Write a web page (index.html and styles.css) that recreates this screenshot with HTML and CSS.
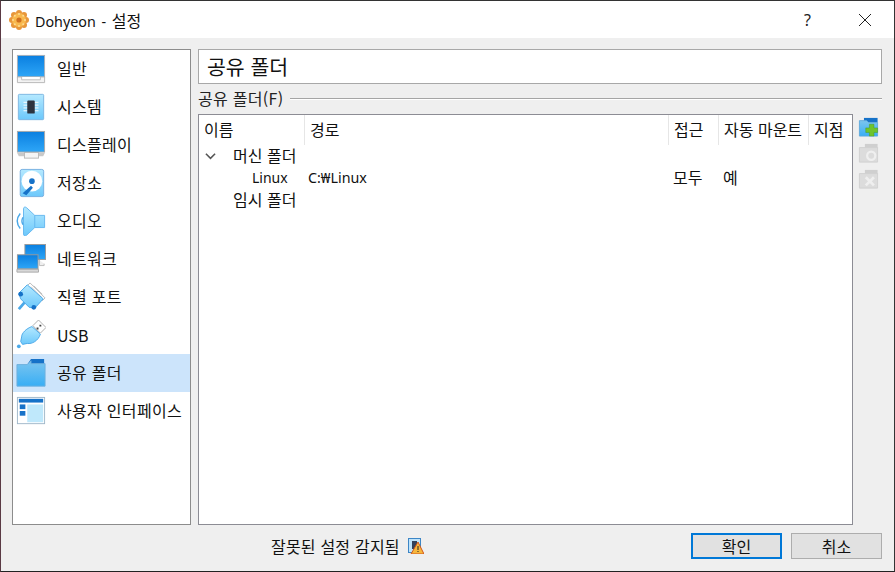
FILE: index.html
```html
<!DOCTYPE html>
<html lang="ko">
<head>
<meta charset="utf-8">
<title>Dohyeon - 설정</title>
<link rel="stylesheet" href="styles.css">
</head>
<body>
<svg class="defs" width="0" height="0">
  <defs>
    <linearGradient id="blue" x1="0" y1="0" x2="0" y2="1"><stop offset="0" stop-color="#0a7fe0"/><stop offset="1" stop-color="#2ea6f7"/></linearGradient>
    <linearGradient id="light" x1="0" y1="0" x2="0" y2="1"><stop offset="0" stop-color="#b5e9ff"/><stop offset="1" stop-color="#6cc8fb"/></linearGradient>
    <linearGradient id="folder" x1="0" y1="0" x2="0" y2="1"><stop offset="0" stop-color="#7cc5ef"/><stop offset="1" stop-color="#38aef5"/></linearGradient>
  </defs>
</svg>
<div class="window">
  <header class="titlebar">
    <svg class="app-icon" viewBox="0 0 20 20"><g fill="#e8963a"><circle cx="10" cy="3" r="3"/><circle cx="10" cy="17" r="3"/><circle cx="3" cy="10" r="3"/><circle cx="17" cy="10" r="3"/><circle cx="5" cy="5" r="3"/><circle cx="15" cy="5" r="3"/><circle cx="5" cy="15" r="3"/><circle cx="15" cy="15" r="3"/></g><circle cx="10" cy="10" r="7" fill="#f8b84e"/><circle cx="10" cy="10" r="2.600" fill="#d0701f"/><g fill="#fcdc95"><circle cx="10" cy="4" r="1"/><circle cx="10" cy="16" r="1"/><circle cx="4" cy="10" r="1"/><circle cx="16" cy="10" r="1"/><circle cx="5.800" cy="5.800" r="1"/><circle cx="14.200" cy="5.800" r="1"/><circle cx="5.800" cy="14.200" r="1"/><circle cx="14.200" cy="14.200" r="1"/></g></svg>
    <span class="title-text">Dohyeon - <span class="title-ko">설정</span></span>
    <span class="help">?</span>
    <svg class="close" viewBox="0 0 14 14"><path d="M1 1l12 12M13 1L1 13" stroke="#222" stroke-width="1" fill="none"/></svg>
  </header>
  <main class="content">
    <nav class="sidebar">
      <div class="nav-item"><svg class="nav-icon" viewBox="0 0 32 32"><rect x="1.500" y="1.500" width="29" height="23" fill="url(#blue)" stroke="#a9b0b8"/><path d="M1.500 24.500h29v6h-29z" fill="#f3f3f3" stroke="#b5b5b5"/><path d="M6 24.500v3h20v-3" fill="#fff" stroke="#bbb"/></svg><span>일반</span></div>
      <div class="nav-item"><svg class="nav-icon" viewBox="0 0 32 32"><rect x="2.500" y="2.500" width="27" height="27" rx="1" fill="url(#light)" stroke="#7cb4e0"/><path d="M8 11h16M8 14h16M8 17h16M8 20h16" stroke="#fff" stroke-width="1"/><rect x="12" y="9" width="8" height="14" rx="1" fill="#2c3340"/></svg><span>시스템</span></div>
      <div class="nav-item"><svg class="nav-icon" viewBox="0 0 32 32"><rect x="1.500" y="1.500" width="29" height="22" fill="url(#blue)" stroke="#a9a9a9"/><path d="M1 24h30l-2 4H3z" fill="#c9c9c9"/><rect x="9" y="24" width="15" height="6" fill="#f5f5f5" stroke="#b8b8b8"/></svg><span>디스플레이</span></div>
      <div class="nav-item"><svg class="nav-icon" viewBox="0 0 32 32"><rect x="4.500" y="1.500" width="25" height="29" rx="2" fill="url(#light)" stroke="#73aee0"/><circle cx="17" cy="14" r="11" fill="#fff"/><circle cx="17" cy="14" r="3" fill="#1672c8"/><path d="M7 27l9-8 2 2-7 8z" fill="#1672c8"/></svg><span>저장소</span></div>
      <div class="nav-item"><svg class="nav-icon" viewBox="0 0 32 32"><path d="M8 3c0-2 2-2.500 3.500-1l8.500 8h10.500v13H20l-8.500 8c-1.500 1.500-3.500 1-3.500-1z" fill="url(#light)" stroke="#63b6ef"/><path d="M20 10v13" stroke="#63b6ef"/><path d="M4.500 8c-4 5-4 11 0 16" fill="none" stroke="#4aa8e8" stroke-width="1.500"/><path d="M7.500 12c-1.500 2.500-1.500 5.500 0 8" fill="none" stroke="#4aa8e8" stroke-width="1.500"/></svg><span>오디오</span></div>
      <div class="nav-item"><svg class="nav-icon" viewBox="0 0 32 32"><rect x="9.500" y="0.500" width="22" height="16" fill="url(#blue)" stroke="#999"/><path d="M25 17v6h5v-2" fill="#eee" stroke="#bbb"/><rect x="1.500" y="11.500" width="22" height="15" fill="url(#blue)" stroke="#999"/><path d="M1 27h23v3H1z" fill="#d8d8d8" stroke="#aaa"/></svg><span>네트워크</span></div>
      <div class="nav-item"><svg class="nav-icon" viewBox="0 0 32 32"><path d="M15 1l16 16-3 3L12 4z" fill="#fff" stroke="#b8b8b8"/><path d="M16 5l11 11M19 4l9 9" stroke="#bbb"/><path d="M12 3l17 15-9 10-6-1-9-9L3 12z" fill="url(#light)" stroke="#4aa8e8"/><circle cx="5" cy="13" r="2.500" fill="#1672c8"/><circle cx="19" cy="27" r="2.500" fill="#1672c8"/><path d="M9 22l-6 7" stroke="#4aa8e8" stroke-width="3"/></svg><span>직렬 포트</span></div>
      <div class="nav-item"><svg class="nav-icon" viewBox="0 0 32 32"><path d="M18 6l6-6 8 8-6 6z" fill="#fff" stroke="#aaa"/><path d="M25 5h2v2h-2zM22 8h2v2h-2z" fill="#444"/><path d="M17 7l9 8c-2 7-9 11-14 10l-5 1-2-3 1-5C6 14 11 9 17 7z" fill="url(#light)" stroke="#4aa8e8"/><circle cx="3" cy="28" r="2" fill="#4aa8e8"/></svg><span class="nav-latin">USB</span></div>
      <div class="nav-item selected"><svg class="nav-icon" viewBox="0 0 32 32"><path d="M16 1h14v6H12z" fill="#1672c8"/><path d="M1 7h11l4-4v3h15v24H1z" fill="url(#folder)" stroke="#6fb0dd"/></svg><span>공유 폴더</span></div>
      <div class="nav-item"><svg class="nav-icon" viewBox="0 0 32 32"><rect x="1.500" y="1.500" width="29" height="28" fill="#fff" stroke="#9fb7c9"/><rect x="3" y="3" width="26" height="4" fill="#1672c8"/><rect x="4" y="9" width="6" height="5" fill="#1672c8"/><rect x="4" y="16" width="6" height="5" fill="#1672c8"/><rect x="12" y="9" width="17" height="19" fill="#bfe8fb"/></svg><span>사용자 인터페이스</span></div>
    </nav>
    <section class="panel">
      <h1 class="page-title">공유 폴더</h1>
      <div class="group-label"><span>공유 폴더(F)</span><i class="rule"></i></div>
      <div class="share-area">
        <div class="tree">
          <div class="tree-row tree-head">
            <div>이름</div><div>경로</div><div>접근</div><div>자동 마운트</div><div>지점</div>
          </div>
          <div class="tree-row tree-item">
            <div class="name-root"><svg class="chevron" viewBox="0 0 12 8"><path d="M1 1.500l5 5 5-5" fill="none" stroke="#555" stroke-width="1.700"/></svg>머신 폴더</div><div></div><div></div><div></div><div></div>
          </div>
          <div class="tree-row tree-item">
            <div class="name-child">Linux</div><div class="path">C:₩Linux</div><div class="cell">모두</div><div class="cell">예</div><div></div>
          </div>
          <div class="tree-row tree-item">
            <div class="name-root no-chevron">임시 폴더</div><div></div><div></div><div></div><div></div>
          </div>
        </div>
        <div class="tools">
          <svg viewBox="0 0 22 22"><path d="M6 1h15v5H6z" fill="#1672c8"/><path d="M1 4h8l2 2h10v15H1z" fill="url(#folder)" stroke="#5fa9dc"/><path d="M12 8h5v4h4v5h-4v4h-5v-4H8v-5h4z" fill="#6ec42c" stroke="#4a9a1a" stroke-width=".5"/></svg>
          <svg viewBox="0 0 22 22"><path d="M7 1h14v5H7z" fill="#cfcfcf"/><path d="M1 5h20v16H1z" fill="#dcdcdc" stroke="#cfcfcf"/><circle cx="14" cy="14" r="4.500" fill="none" stroke="#efefef" stroke-width="2.500"/></svg>
          <svg viewBox="0 0 22 22"><path d="M7 1h14v5H7z" fill="#cfcfcf"/><path d="M1 5h20v16H1z" fill="#dcdcdc" stroke="#cfcfcf"/><path d="M8 9l9 9M17 9l-9 9" stroke="#efefef" stroke-width="3"/></svg>
        </div>
      </div>
    </section>
  </main>
  <footer class="footer">
    <div class="warning">
      <span>잘못된 설정 감지됨</span>
      <svg class="warn-icon" viewBox="0 0 16 16"><rect x="0.500" y="0.500" width="12" height="14" fill="#bfe3fa" stroke="#3d86c6"/><rect x="4" y="3" width="5" height="8" fill="#33425a"/><path d="M10 4l6 12H3z" fill="#f6b73c" stroke="#d2561a"/><path d="M9.500 8h1v4h-1zM9.500 13h1v1h-1z" fill="#222"/></svg>
    </div>
    <button class="btn primary" type="button">확인</button>
    <button class="btn" type="button">취소</button>
  </footer>
</div>
</body>
</html>
```
FILE: styles.css
```css
* { box-sizing: border-box; }
html, body { margin: 0; padding: 0; height: 100%; }
body {
  width: 895px;
  height: 572px;
  overflow: hidden;
  font-family: "Noto Sans", "Noto Sans CJK KR", sans-serif;
  font-size: 16px;
  color: #111;
  background: #efefef;
}
.defs { display: block; height: 0; }
.window {
  width: 895px;
  height: 572px;
  display: flex;
  flex-direction: column;
  border: 1px solid #333;
  border-bottom-color: #222;
  border-left-color: #5a3a44;
  background: #efefef;
}
.titlebar {
  height: 37px;
  background: #fff;
  display: flex;
  align-items: center;
  padding-left: 8px;
  flex: none;
}
.app-icon { width: 20px; height: 20px; }
.title-text { margin-left: 6px; font-size: 14.3px; color: #111; word-spacing: 2px; white-space: nowrap; }
.title-ko { font-family: "Noto Sans CJK KR", sans-serif; font-size: 16px; }
.help { margin-left: auto; width: 14px; font-size: 16px; color: #222; }
.close { width: 14px; height: 14px; margin-left: 40px; margin-right: 22px; }
.content {
  flex: 1;
  display: flex;
  gap: 7px;
  padding: 11px 12px 0 11px;
  min-height: 0;
}
.sidebar {
  width: 179px;
  height: 476px;
  background: #fff;
  border: 1px solid #8c8c8c;
  flex: none;
}
.nav-item {
  height: 38px;
  display: flex;
  align-items: center;
  padding-left: 3px;
  gap: 11px;
  font-family: "Noto Sans CJK KR", sans-serif;
  font-size: 16px;
  letter-spacing: .3px;
}
.nav-item span { position: relative; top: -1px; white-space: nowrap; }
.nav-item .nav-latin { top: 0; letter-spacing: 0; }
.nav-item.selected { background: #cce4fb; }
.nav-icon { width: 30px; height: 30px; flex: none; }
.panel { flex: 1; display: flex; flex-direction: column; min-width: 0; }
.page-title {
  margin: 0;
  height: 35px;
  flex: none;
  background: #fff;
  border: 1px solid #a8a8a8;
  font-family: "Noto Sans CJK KR", sans-serif;
  font-size: 20.500px;
  font-weight: 400;
  line-height: 33px;
  padding-left: 8px;
  color: #111;
}
.group-label {
  display: flex;
  align-items: center;
  gap: 7px;
  height: 18px;
  flex: none;
  margin-top: 6px;
  margin-bottom: 6px;
  font-family: "Noto Sans CJK KR", sans-serif;
  font-size: 16px;
  line-height: 16px;
  letter-spacing: .3px;
  color: #222;
  white-space: nowrap;
}
.group-label span { padding-bottom: 2px; }
.rule { flex: 1; height: 2px; background: linear-gradient(#a5a5a5 50%, #fff 50%); }
.share-area { display: flex; gap: 5px; }
.tree {
  width: 655px;
  height: 411px;
  background: #fff;
  border: 1px solid #8c8c94;
  font-family: "Noto Sans CJK KR", sans-serif;
}
.tree-row {
  display: grid;
  grid-template-columns: 106px 364px 50px 90px 43px;
}
.tree-head { height: 30px; }
.tree-head > div {
  border-right: 1px solid #e6e6e6;
  padding-left: 5px;
  line-height: 29px;
  font-size: 16px;
  white-space: nowrap;
}
.tree-head > div:last-child { border-right: 0; }
.tree-item { height: 22px; line-height: 21px; font-size: 16px; }
.name-root { display: flex; align-items: center; white-space: nowrap; padding-left: 6px; padding-bottom: 2px; }
.chevron { width: 11px; height: 8px; margin-right: 17px; flex: none; }
.no-chevron { padding-left: 34px; }
.name-child { padding-left: 53px; font-family: "Noto Sans", sans-serif; font-size: 14px; }
.path { padding-left: 3px; font-family: "Noto Sans", "Noto Sans CJK KR", sans-serif; font-size: 14.300px; white-space: nowrap; }
.cell { padding-left: 4px; }
.tools { display: flex; flex-direction: column; gap: 6px; padding-top: 3px; }
.tools svg { width: 21px; height: 20px; display: block; }
.footer {
  height: 46px;
  flex: none;
  display: flex;
  align-items: center;
  padding: 0 12px 5px 270px;
}
.warning { display: flex; align-items: center; gap: 8px; font-family: "Noto Sans CJK KR", sans-serif; font-size: 16px; letter-spacing: .2px; flex: 1; }
.warn-icon { width: 16px; height: 16px; }
.btn {
  width: 91px;
  height: 26px;
  flex: none;
  border: 1px solid #adadad;
  background: #e1e1e1;
  font-family: "Noto Sans CJK KR", sans-serif;
  font-size: 16px;
  line-height: 20px;
  color: #111;
  padding: 0;
  margin-left: 9px;
}
.btn.primary { border: 2px solid #0078d7; margin-left: 0; }
```
